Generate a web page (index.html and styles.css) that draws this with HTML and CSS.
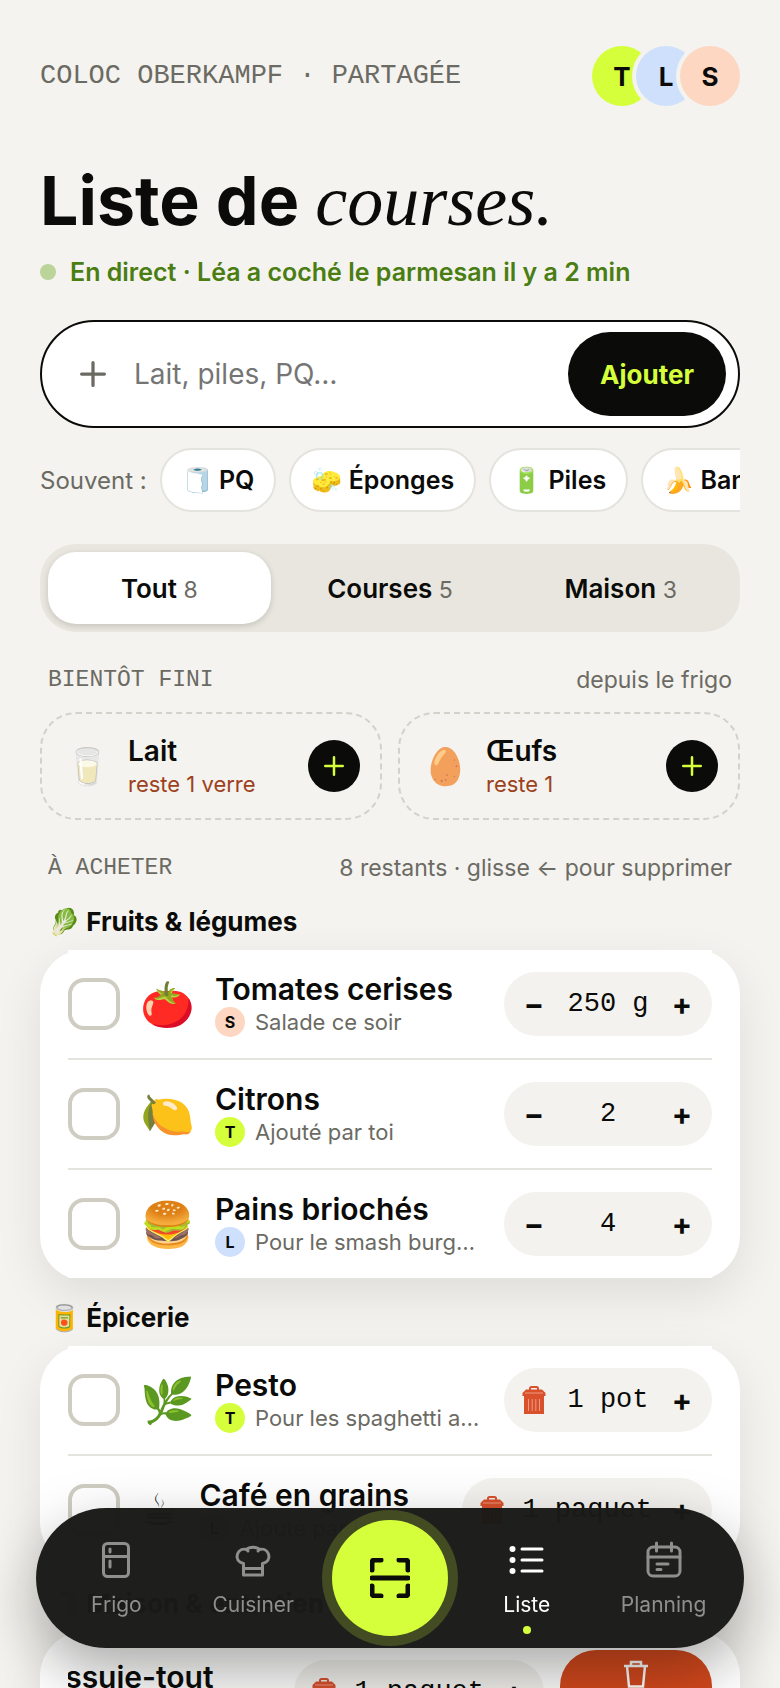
FILE: index.html
```html
<!DOCTYPE html>
<html lang="fr">
<head>
    <meta charset="UTF-8">
    <meta name="viewport" content="width=device-width, initial-scale=1.0">
    <title>Liste de courses</title>
    <link rel="stylesheet" href="styles.css">
</head>
<body>
    <!-- Shared icons -->
    <svg class="sprite" aria-hidden="true">
        <symbol id="icon-plus" viewBox="0 0 24 24">
            <path d="M12 1.5v21M1.5 12h21" fill="none" stroke="currentColor" stroke-width="3" stroke-linecap="round"/>
        </symbol>
        <symbol id="icon-bin" viewBox="0 0 24 28">
            <path d="M8 4V2.500Q8 1 9.500 1h5Q16 1 16 2.500V4" fill="none" stroke="currentColor" stroke-width="2"/>
            <path d="M4 3.500h16l3.500 3.500v3H.5V7z" fill="currentColor"/>
            <path d="M2 10h20v18H2z" fill="currentColor"/>
            <path d="M3 7h18M6.500 13v12M10.200 13v12M13.800 13v12M17.500 13v12" stroke="#f0997f" stroke-width="1"/>
        </symbol>
        <symbol id="icon-trash" viewBox="0 0 26 28">
            <path d="M1 6h24M8 5.500V2h10v3.500M4 6l2 20.500h14L22 6" fill="none" stroke="currentColor" stroke-width="2.500"/>
        </symbol>
    </svg>

    <main class="screen">
        <header class="top">
            <p class="eyebrow">COLOC OBERKAMPF · PARTAGÉE</p>
            <div class="avatars">
                <span class="avatar lime">T</span>
                <span class="avatar blue">L</span>
                <span class="avatar peach">S</span>
            </div>
        </header>

        <h1>Liste de <em>courses.</em></h1>
        <p class="status">En direct · Léa a coché le parmesan il y a 2 min</p>

        <form class="add-form">
            <svg class="add-icon" aria-hidden="true"><use href="#icon-plus"/></svg>
            <input type="text" placeholder="Lait, piles, PQ…" aria-label="Ajouter un article">
            <button type="button">Ajouter</button>
        </form>

        <div class="often">
            <span class="often-label">Souvent :</span>
            <button class="chip">🧻 PQ</button>
            <button class="chip">🧽 Éponges</button>
            <button class="chip">🔋 Piles</button>
            <button class="chip">🍌 Bananes</button>
        </div>

        <div class="tabs">
            <button class="tab active">Tout <span>8</span></button>
            <button class="tab">Courses <span>5</span></button>
            <button class="tab">Maison <span>3</span></button>
        </div>

        <!-- Running low -->
        <div class="section-head">
            <h2>BIENTÔT FINI</h2>
            <span>depuis le frigo</span>
        </div>
        <div class="low-grid">
            <div class="low-card">
                <span class="low-emoji">🥛</span>
                <div class="low-info">
                    <strong>Lait</strong>
                    <span>reste 1 verre</span>
                </div>
                <button aria-label="Ajouter du lait"><svg><use href="#icon-plus"/></svg></button>
            </div>
            <div class="low-card">
                <span class="low-emoji">🥚</span>
                <div class="low-info">
                    <strong>Œufs</strong>
                    <span>reste 1</span>
                </div>
                <button aria-label="Ajouter des œufs"><svg><use href="#icon-plus"/></svg></button>
            </div>
        </div>

        <!-- To buy -->
        <div class="section-head">
            <h2>À ACHETER</h2>
            <span>8 restants · glisse ← pour supprimer</span>
        </div>

        <h3>🥬 Fruits &amp; légumes</h3>
        <ul class="list">
            <li class="row">
                <div class="item">
                    <input type="checkbox" id="tomates">
                    <span class="emoji">🍅</span>
                    <div class="info">
                        <label for="tomates">Tomates cerises</label>
                        <div class="note"><span class="mini peach">S</span><span class="note-text">Salade ce soir</span></div>
                    </div>
                    <div class="stepper">
                        <button aria-label="Moins">−</button><span>250 g</span><button aria-label="Plus">+</button>
                    </div>
                </div>
            </li>
            <li class="row">
                <div class="item">
                    <input type="checkbox" id="citrons">
                    <span class="emoji">🍋</span>
                    <div class="info">
                        <label for="citrons">Citrons</label>
                        <div class="note"><span class="mini lime">T</span><span class="note-text">Ajouté par toi</span></div>
                    </div>
                    <div class="stepper">
                        <button aria-label="Moins">−</button><span>2</span><button aria-label="Plus">+</button>
                    </div>
                </div>
            </li>
            <li class="row">
                <div class="item">
                    <input type="checkbox" id="pains">
                    <span class="emoji">🍔</span>
                    <div class="info">
                        <label for="pains">Pains briochés</label>
                        <div class="note"><span class="mini blue">L</span><span class="note-text">Pour le smash burger maison</span></div>
                    </div>
                    <div class="stepper">
                        <button aria-label="Moins">−</button><span>4</span><button aria-label="Plus">+</button>
                    </div>
                </div>
            </li>
        </ul>

        <h3>🥫 Épicerie</h3>
        <ul class="list">
            <li class="row">
                <div class="item">
                    <input type="checkbox" id="pesto">
                    <span class="emoji">🌿</span>
                    <div class="info">
                        <label for="pesto">Pesto</label>
                        <div class="note"><span class="mini lime">T</span><span class="note-text">Pour les spaghetti au pesto</span></div>
                    </div>
                    <div class="stepper">
                        <button aria-label="Retirer"><svg class="bin"><use href="#icon-bin"/></svg></button><span>1 pot</span><button aria-label="Plus">+</button>
                    </div>
                </div>
            </li>
            <li class="row">
                <div class="item">
                    <input type="checkbox" id="cafe">
                    <span class="emoji text-emoji">☕&#xFE0E;</span>
                    <div class="info">
                        <label for="cafe">Café en grains</label>
                        <div class="note"><span class="mini blue">L</span><span class="note-text">Ajouté par Léa</span></div>
                    </div>
                    <div class="stepper">
                        <button aria-label="Retirer"><svg class="bin"><use href="#icon-bin"/></svg></button><span>1 paquet</span><button aria-label="Plus">+</button>
                    </div>
                </div>
            </li>
        </ul>

        <h3>🧻 Maison &amp; entretien</h3>
        <ul class="list">
            <li class="row swiped">
                <div class="item">
                    <input type="checkbox" id="essuie-tout">
                    <span class="emoji">🧻</span>
                    <div class="info">
                        <label for="essuie-tout">Essuie-tout</label>
                        <div class="note"><span class="mini peach">S</span><span class="note-text">Presque fini</span></div>
                    </div>
                    <div class="stepper">
                        <button aria-label="Retirer"><svg class="bin"><use href="#icon-bin"/></svg></button><span>1 paquet</span><button aria-label="Plus">+</button>
                    </div>
                </div>
                <button class="delete-btn"><svg><use href="#icon-trash"/></svg>Supprimer</button>
            </li>
        </ul>
    </main>

    <nav class="nav">
        <a href="#frigo">
            <svg viewBox="0 0 40 40"><rect x="7.500" y="3.500" width="25" height="33" rx="4"/><path d="M7.500 16.500h25M14 9v3M14 21v6"/></svg>
            Frigo
        </a>
        <a href="#cuisiner">
            <svg viewBox="0 0 40 40"><path d="M10.500 35V23.500C5 22.500 3 18 4.500 14c1.500-4 5.500-5.500 9-4.500 3-3 10-3 13 0 3.500-1 7.500.5 9 4.500 1.500 4-.5 8.500-6 9.500V35zM10.500 28.500h19M13.500 9.500l1.500 1.500M26.500 9.500L25 11"/></svg>
            Cuisiner
        </a>
        <a href="#scanner" class="scan" aria-label="Scanner">
            <svg viewBox="0 0 40 40"><path d="M2 12V5q0-3 3-3h6M29 2h6q3 0 3 3v7M38 28v7q0 3-3 3h-6M11 38H5q-3 0-3-3v-7M2 20h36"/></svg>
        </a>
        <a href="#liste" class="active">
            <svg viewBox="0 0 40 40"><path d="M15 9h20M15 20h20M15 31h20"/><g fill="currentColor" stroke="none"><circle cx="5.500" cy="9" r="3"/><circle cx="5.500" cy="20" r="3"/><circle cx="5.500" cy="31" r="3"/></g></svg>
            Liste
        </a>
        <a href="#planning">
            <svg viewBox="0 0 40 40"><rect x="4" y="7" width="32" height="29" rx="5"/><path d="M4 17h32M12.500 3v8M27.500 3v8M13 24h11M13 29.500h4"/></svg>
            Planning
        </a>
    </nav>
</body>
</html>
```

FILE: styles.css
```css
* {
    margin: 0;
    padding: 0;
    box-sizing: border-box;
}

body {
    background-color: #f4f3ef;
    color: #0b0b09;
    font-family: Inter, "Liberation Sans", sans-serif;
    font-size: 26px;
}

button, input {
    font: inherit;
    color: inherit;
    border: none;
    background: none;
}

button {
    cursor: pointer;
}

svg {
    display: block;
}

.sprite {
    position: absolute;
    width: 0;
    height: 0;
}

.screen {
    height: 100vh;
    overflow-x: hidden;
    overflow-y: auto;
    scrollbar-width: none;
    padding: 46px 40px 200px;
}

.lime {
    background-color: #d4ff3a;
}

.blue {
    background-color: #cfe0fd;
}

.peach {
    background-color: #fdd7c2;
}

/* Header */
.top {
    display: flex;
    justify-content: space-between;
    align-items: center;
}

.eyebrow {
    font-family: "Liberation Mono", monospace;
    font-size: 27px;
    color: #6b6a63;
}

.avatars {
    display: flex;
}

.avatar {
    width: 60px;
    height: 60px;
    border-radius: 50%;
    box-shadow: 0 0 0 4px #f4f3ef;
    display: flex;
    align-items: center;
    justify-content: center;
    font-weight: 700;
}

.avatar + .avatar {
    margin-left: -16px;
}

h1 {
    margin-top: 54px;
    font-size: 68px;
    line-height: 80px;
    font-weight: 700;
}

h1 em {
    font-family: "Liberation Serif", serif;
    font-size: 72px;
    line-height: 72px;
    font-weight: 400;
}

.status {
    display: flex;
    align-items: center;
    gap: 14px;
    margin-top: 16px;
    font-size: 25px;
    line-height: 32px;
    font-weight: 600;
    color: #4a7d12;
}

.status::before {
    content: "";
    width: 16px;
    height: 16px;
    border-radius: 50%;
    background-color: #bbd49a;
}

/* Add form */
.add-form {
    display: flex;
    align-items: center;
    margin-top: 32px;
    padding: 10px 12px 10px 38px;
    background-color: white;
    border: 2px solid #0b0b09;
    border-radius: 54px;
}

.add-icon {
    width: 26px;
    height: 26px;
    color: #6b6a63;
}

.add-form input {
    flex: 1;
    min-width: 0;
    margin: 0 28px;
    font-size: 28px;
    outline: none;
}

.add-form input::placeholder {
    color: #757575;
}

.add-form button {
    height: 84px;
    padding: 0 32px;
    border-radius: 42px;
    background-color: #0b0b09;
    color: #d4ff3a;
    font-weight: 700;
}

/* Frequent items */
.often {
    display: flex;
    align-items: center;
    gap: 13px;
    margin-top: 20px;
    overflow: hidden;
    white-space: nowrap;
}

.often-label {
    color: #6b6a63;
    font-size: 24px;
}

.chip {
    flex-shrink: 0;
    height: 64px;
    padding: 0 20px;
    background-color: white;
    border: 2px solid #e4e3dd;
    border-radius: 32px;
    font-size: 25px;
    font-weight: 600;
}

.tabs {
    display: grid;
    grid-template-columns: repeat(3, 1fr);
    gap: 8px;
    margin-top: 32px;
    padding: 8px;
    background-color: #e8e6df;
    border-radius: 36px;
}

.tab {
    height: 72px;
    border-radius: 28px;
    font-weight: 600;
}

.tab span {
    font-size: 23px;
    font-weight: 400;
    color: #6b6a63;
}

.tab.active {
    background-color: white;
    box-shadow: 0 2px 6px rgba(11, 11, 9, 0.16);
}

/* Sections */
.section-head {
    display: flex;
    justify-content: space-between;
    align-items: center;
    margin-top: 32px;
    padding: 0 8px;
    line-height: 32px;
    font-size: 23px;
    color: #6b6a63;
}

.section-head h2 {
    font-family: "Liberation Mono", monospace;
    font-size: 23px;
    font-weight: 400;
}

.low-grid {
    display: grid;
    grid-template-columns: 1fr 1fr;
    gap: 16px;
    margin-top: 16px;
}

.low-card {
    display: flex;
    align-items: center;
    gap: 16px;
    height: 108px;
    padding: 0 20px;
    border: 2px dashed #d2d1ca;
    border-radius: 36px;
}

.low-emoji {
    width: 50px;
    font-size: 36px;
    text-align: center;
}

.low-info {
    flex: 1;
    display: flex;
    flex-direction: column;
}

.low-info strong {
    font-size: 28px;
    line-height: 36px;
    font-weight: 600;
}

.low-info span {
    font-size: 22px;
    line-height: 30px;
    color: #9c4120;
}

.low-card button {
    display: flex;
    align-items: center;
    justify-content: center;
    width: 52px;
    height: 52px;
    border-radius: 50%;
    background-color: #0b0b09;
    color: #d4ff3a;
}

.low-card svg {
    width: 20px;
    height: 20px;
}

h3 {
    margin-top: 20px;
    padding-left: 8px;
    font-size: 26px;
    line-height: 36px;
    font-weight: 700;
}

/* Shopping lists */
.list {
    list-style: none;
    margin-top: 10px;
    padding: 0 28px;
    background-color: white;
    border-radius: 44px;
    box-shadow: 0 16px 48px rgba(11, 11, 9, 0.09);
}

.row {
    display: flex;
    height: 110px;
    overflow: hidden;
    background-color: white;
    border-bottom: 2px solid #e4e3dd;
}

.item {
    flex: 0 0 100%;
    min-width: 0;
    display: flex;
    align-items: center;
    gap: 20px;
}

.item input {
    appearance: none;
    flex-shrink: 0;
    width: 52px;
    height: 52px;
    background-color: white;
    border: 4px solid #cfccc2;
    border-radius: 16px;
}

.emoji {
    font-size: 44px;
    line-height: 52px;
}

.text-emoji {
    font-family: "DejaVu Sans", sans-serif;
}

.info {
    flex: 1;
    min-width: 0;
}

.info label {
    display: block;
    font-size: 30px;
    line-height: 36px;
    font-weight: 600;
    white-space: nowrap;
}

.note {
    display: flex;
    align-items: center;
    gap: 10px;
}

.mini {
    flex-shrink: 0;
    width: 30px;
    height: 30px;
    border-radius: 50%;
    font-size: 16px;
    line-height: 30px;
    font-weight: 700;
    text-align: center;
}

.note-text {
    overflow: hidden;
    text-overflow: ellipsis;
    white-space: nowrap;
    font-size: 22px;
    line-height: 30px;
    color: #6b6a63;
}

.stepper {
    flex-shrink: 0;
    display: flex;
    align-items: center;
    height: 64px;
    border-radius: 32px;
    background-color: #f3f2ee;
}

.stepper button {
    display: flex;
    align-items: center;
    justify-content: center;
    width: 60px;
    height: 64px;
    font-size: 30px;
    font-weight: 700;
}

.stepper span {
    min-width: 88px;
    font-family: "Liberation Mono", monospace;
    font-size: 27px;
    text-align: center;
}

.bin {
    width: 24px;
    height: 28px;
    color: #d8502c;
}

/* Swiped row: the item slides left and uncovers the delete button */
.swiped {
    height: 122px;
}

.swiped .item {
    margin-left: -168px;
}

.delete-btn {
    flex: 0 0 152px;
    display: flex;
    flex-direction: column;
    align-items: center;
    gap: 6px;
    margin: 18px 0 16px 16px;
    padding-top: 10px;
    border-radius: 36px;
    background-color: #d4481c;
    color: white;
    font-size: 22px;
}

.delete-btn svg {
    width: 26px;
    height: 28px;
}

/* Bottom navigation */
.nav {
    position: fixed;
    left: 36px;
    right: 36px;
    bottom: 40px;
    display: grid;
    grid-template-columns: repeat(5, 1fr);
    height: 140px;
    padding: 12px;
    border-radius: 70px;
    background-color: rgba(25, 25, 23, 0.98);
    box-shadow: 0 24px 60px rgba(11, 11, 9, 0.35);
}

.nav a {
    position: relative;
    display: flex;
    flex-direction: column;
    align-items: center;
    gap: 8px;
    padding-top: 20px;
    font-size: 21px;
    line-height: 34px;
    color: #8f8f8d;
    text-decoration: none;
}

.nav svg {
    width: 40px;
    height: 40px;
    fill: none;
    stroke: currentColor;
    stroke-width: 3;
    stroke-linecap: round;
    stroke-linejoin: round;
}

.nav .active {
    color: white;
}

.nav .active::after {
    content: "";
    position: absolute;
    bottom: 2px;
    width: 8px;
    height: 8px;
    border-radius: 50%;
    background-color: #d4ff3a;
}

.nav .scan {
    justify-self: center;
    justify-content: center;
    width: 116px;
    height: 116px;
    padding: 0;
    border-radius: 50%;
    background-color: #d4ff3a;
    color: #0b0b09;
    box-shadow: 0 0 0 10px rgba(212, 255, 58, 0.2);
}

.nav .scan svg {
    stroke-width: 5;
}
```
